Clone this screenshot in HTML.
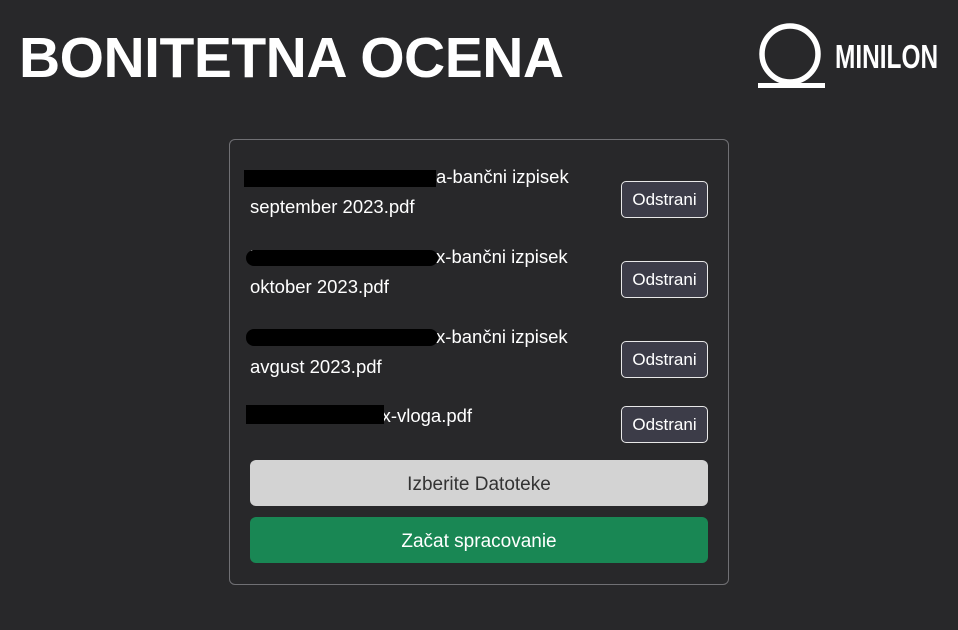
<!DOCTYPE html>
<html><head><style>
body{margin:0;width:958px;height:630px;background:#28282a;font-family:"Liberation Sans",sans-serif;color:#fff;position:relative;overflow:hidden}
.t{position:absolute;left:19px;top:25px;font-size:57px;font-weight:bold;letter-spacing:-0.5px;white-space:nowrap}
.card{position:absolute;left:229px;top:139px;width:498px;height:444px;border:1px solid #707074;border-radius:6px}
.txt{position:absolute;left:250px;font-size:18.5px;line-height:30px;white-space:nowrap}
.btn{position:absolute;left:621px;width:85px;height:35px;border:1px solid #e8e8e8;border-radius:5px;background:#3c3c48;font-size:17px;line-height:35px;text-align:center}
.r{position:absolute;background:#000}
.big{position:absolute;left:250px;width:458px;height:46px;border-radius:6px;font-size:19px;line-height:50px;text-align:center}
</style></head><body>
<div class="t">BONITETNA OCENA</div>
<svg style="position:absolute;left:756px;top:22px" width="72" height="70" viewBox="0 0 72 70">
<circle cx="34" cy="32" r="28" fill="none" stroke="#fff" stroke-width="5.5"/>
<rect x="2" y="61" width="67" height="5" fill="#fff"/>
</svg>
<div style="position:absolute;left:835px;top:38px;font-size:33px;font-weight:bold;transform:scaleX(0.74);transform-origin:left;letter-spacing:0">MINILON</div>
<div class="card"></div>
<div class="txt" style="top:162px">Xxxxxxx Xxxxx Xxxxxxa-bančni izpisek<br>september 2023.pdf</div>
<div class="r" style="left:244px;top:170px;width:192px;height:17px"></div>
<div class="btn" style="top:181px">Odstrani</div>
<div class="txt" style="top:242px">Xxxxxxx Xxxxx Xxxxxxx-bančni izpisek<br>oktober 2023.pdf</div>
<div class="r" style="left:246px;top:250px;width:192px;height:16px;border-radius:8px"></div>
<div class="btn" style="top:261px">Odstrani</div>
<div class="txt" style="top:322px">Xxxxxxx Xxxxx Xxxxxxx-bančni izpisek<br>avgust 2023.pdf</div>
<div class="r" style="left:246px;top:329px;width:192px;height:17px;border-radius:8px"></div>
<div class="btn" style="top:341px">Odstrani</div>
<div class="txt" style="top:401px">Xxxxxxx Xxxxxxx-vloga.pdf</div>
<div class="r" style="left:246px;top:405px;width:138px;height:19px"></div>
<div class="btn" style="top:406px">Odstrani</div>
<div class="big" style="top:460px;background:#d3d3d3;color:#333">Izberite Datoteke</div>
<div class="big" style="top:517px;background:#198754;color:#fff">Začat spracovanie</div>
</body></html>
